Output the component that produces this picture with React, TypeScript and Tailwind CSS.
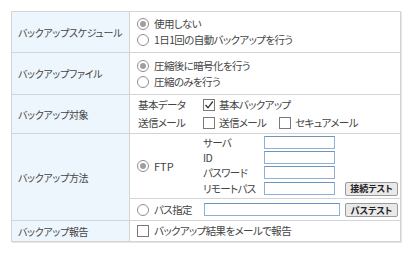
import React from "react";

function Radio({ checked }: { checked?: boolean }) {
  return (
    <span className="inline-flex w-[12px] h-[12px] rounded-full border border-[#8e8e8e] bg-white items-center justify-center shrink-0">
      {checked && <span className="w-[6px] h-[6px] rounded-full bg-[#a0a0a0]" />}
    </span>
  );
}

function Check({ checked }: { checked?: boolean }) {
  return (
    <span className="inline-flex w-[12px] h-[12px] border border-[#7a7a7a] bg-white items-center justify-center shrink-0">
      {checked && (
        <svg width="10" height="10" viewBox="0 0 10 10">
          <path d="M1.5 5 L4 7.8 L8.8 1.5" fill="none" stroke="#333" strokeWidth="1.3" />
        </svg>
      )}
    </span>
  );
}

function Input({ w }: { w: string }) {
  return (
    <span
      className={`block h-[13px] border border-[#8db1d4] border-t-[#6f95bb] bg-white ${w}`}
    />
  );
}

function Btn({ children }: { children: React.ReactNode }) {
  return (
    <span className="inline-flex items-center justify-center w-[53px] h-[14px] border border-[#9a9a9a] bg-[#e9e9e9] rounded-[2px] text-[9px] font-bold text-[#222] leading-none tracking-normal">
      {children}
    </span>
  );
}

const th =
  "w-[118px] bg-[#eef6fd] border border-[#d4d4d4] text-left font-normal pl-[6px] align-middle whitespace-nowrap text-[10px] tracking-[-0.3px]";
const td = "border border-[#d4d4d4] pl-[7px] align-middle whitespace-nowrap";

export default function App() {
  return (
    <div className="bg-white w-[414px] h-[253px] pl-[11px] pt-[11px] font-['Noto_Sans_CJK_JP',sans-serif] [font-feature-settings:'palt'] text-[10.5px] tracking-[-0.6px] text-[#444]">
      <table className="border-collapse table-fixed w-[390px] shadow-[1px_1px_0_#e6e6e6]">
        <colgroup>
          <col className="w-[118px]" />
          <col />
        </colgroup>
        <tbody>
          <tr>
            <th className={`${th} h-[41px]`}>バックアップスケジュール</th>
            <td className={td}>
              <div className="flex flex-col leading-[16px]">
                <label className="flex items-center gap-[5px]">
                  <Radio checked />
                  <span>使用しない</span>
                </label>
                <label className="flex items-center gap-[5px]">
                  <Radio />
                  <span>1日1回の自動バックアップを行う</span>
                </label>
              </div>
            </td>
          </tr>
          <tr>
            <th className={`${th} h-[42px]`}>バックアップファイル</th>
            <td className={td}>
              <div className="flex flex-col leading-[16px]">
                <label className="flex items-center gap-[5px]">
                  <Radio checked />
                  <span>圧縮後に暗号化を行う</span>
                </label>
                <label className="flex items-center gap-[5px]">
                  <Radio />
                  <span>圧縮のみを行う</span>
                </label>
              </div>
            </td>
          </tr>
          <tr>
            <th className={`${th} h-[39px]`}>バックアップ対象</th>
            <td className={`${td} pl-[8px]`}>
              <div className="grid grid-cols-[65px_auto] leading-[18px]">
                <span>基本データ</span>
                <label className="flex items-center gap-[4px]">
                  <Check checked />
                  <span>基本バックアップ</span>
                </label>
                <span>送信メール</span>
                <div className="flex items-center">
                  <label className="flex items-center gap-[4px] w-[76px]">
                    <Check />
                    <span>送信メール</span>
                  </label>
                  <label className="flex items-center gap-[4px]">
                    <Check />
                    <span>セキュアメール</span>
                  </label>
                </div>
              </div>
            </td>
          </tr>
          <tr>
            <th className={th} rowSpan={2}>
              バックアップ方法
            </th>
            <td className={`${td} h-[65px]`}>
              <div className="flex items-center">
                <label className="flex items-center gap-[5px] w-[66px]">
                  <Radio checked />
                  <span className="text-[11px] tracking-normal">FTP</span>
                </label>
                <div className="grid grid-cols-[61px_71px_auto] items-center gap-y-[2px] leading-[13px]">
                  <span>サーバ</span>
                  <Input w="w-[71px]" />
                  <span />
                  <span>ID</span>
                  <Input w="w-[71px]" />
                  <span />
                  <span>パスワード</span>
                  <Input w="w-[71px]" />
                  <span />
                  <span>リモートパス</span>
                  <Input w="w-[71px]" />
                  <span className="pl-[10px]">
                    <Btn>接続テスト</Btn>
                  </span>
                </div>
              </div>
            </td>
          </tr>
          <tr>
            <td className={`${td} h-[22px]`}>
              <div className="flex items-center">
                <label className="flex items-center gap-[5px] w-[67px]">
                  <Radio />
                  <span>パス指定</span>
                </label>
                <Input w="w-[136px]" />
                <span className="pl-[5px]">
                  <Btn>パステスト</Btn>
                </span>
              </div>
            </td>
          </tr>
          <tr>
            <th className={`${th} h-[21px]`}>バックアップ報告</th>
            <td className={td}>
              <label className="flex items-center gap-[5px]">
                <Check />
                <span>バックアップ結果をメールで報告</span>
              </label>
            </td>
          </tr>
        </tbody>
      </table>
    </div>
  );
}
